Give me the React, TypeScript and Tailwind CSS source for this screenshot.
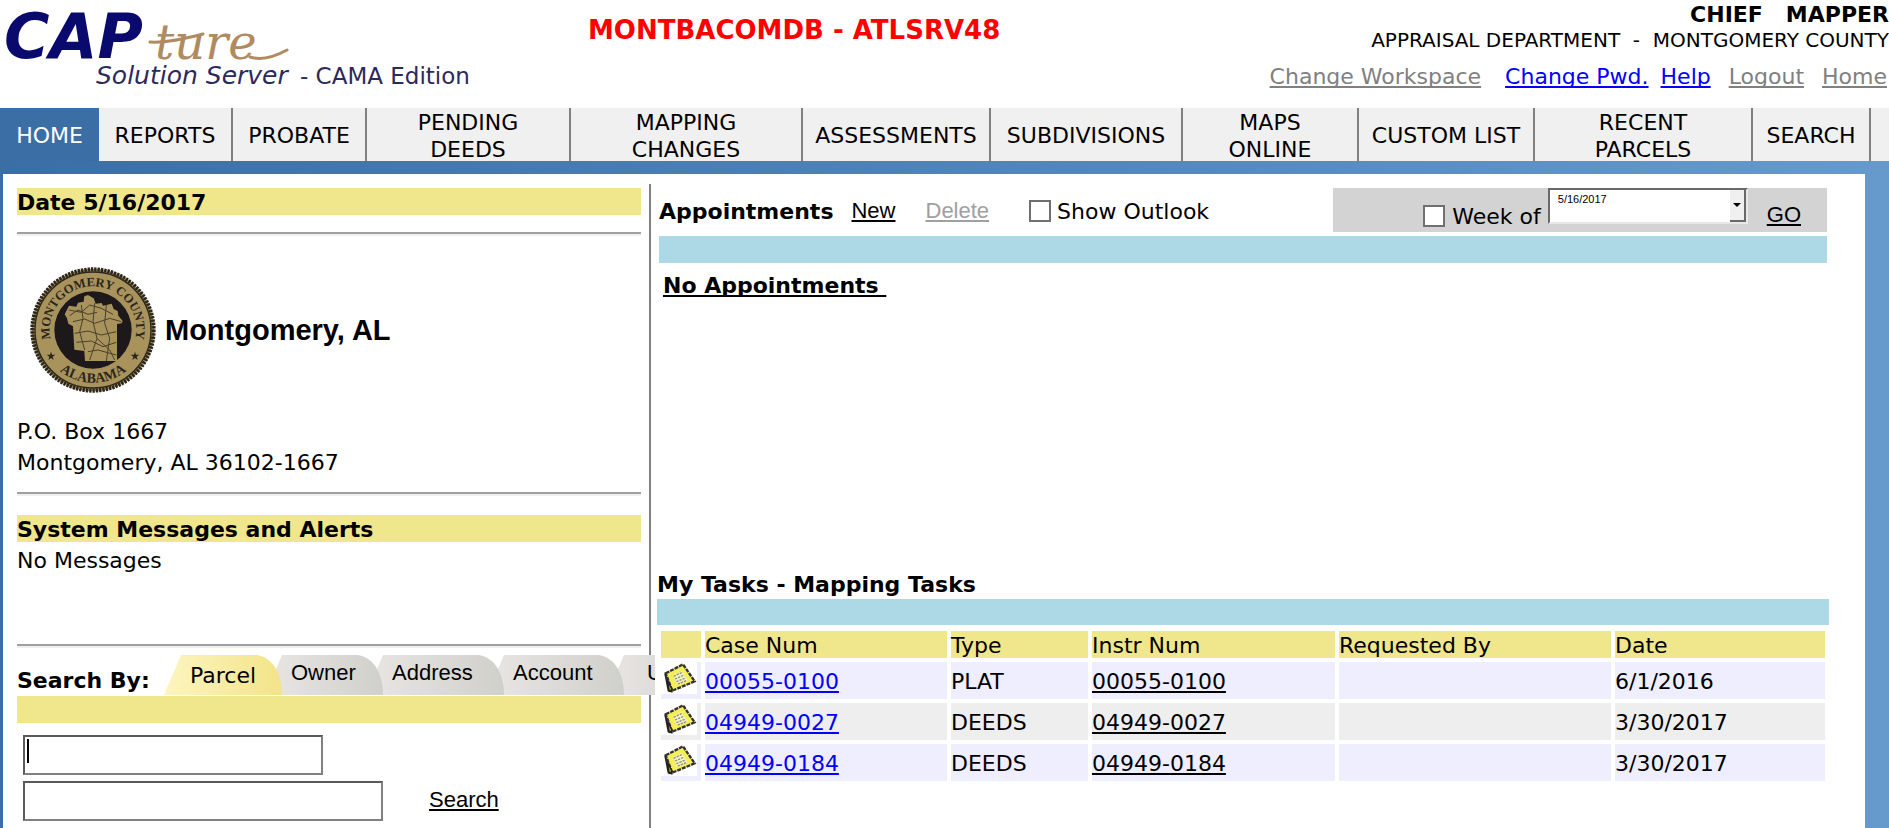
import React from "react";

const sans = "font-['DejaVu_Sans','Verdana',sans-serif]";
const arial = "font-['Liberation_Sans','Arial',sans-serif]";
const underlined =
  "underline decoration-2 underline-offset-2 [text-decoration-skip-ink:none]";

const navItems = [
  "HOME",
  "REPORTS",
  "PROBATE",
  "PENDING\nDEEDS",
  "MAPPING\nCHANGES",
  "ASSESSMENTS",
  "SUBDIVISIONS",
  "MAPS\nONLINE",
  "CUSTOM LIST",
  "RECENT\nPARCELS",
  "SEARCH",
];

const tabs = [
  { label: "Parcel", size: "w-[118px] pl-[26px] z-50", width: 118 },
  { label: "Owner", size: "w-[118px] pl-[26px] z-40 -ml-[17px]", width: 118 },
  { label: "Address", size: "w-[138px] pl-[26px] z-30 -ml-[17px]", width: 138 },
  { label: "Account", size: "w-[137px] pl-[26px] z-20 -ml-[17px]", width: 137 },
  { label: "U", size: "w-[119px] pl-[40px] z-10 -ml-[17px]", width: 119 },
];

const tasks = [
  { num: "00055-0100", type: "PLAT", date: "6/1/2016" },
  { num: "04949-0027", type: "DEEDS", date: "3/30/2017" },
  { num: "04949-0184", type: "DEEDS", date: "3/30/2017" },
];

function Logo() {
  return (
    <svg width="480" height="100" viewBox="0 0 480 100" role="img" aria-label="CAPture Solution Server">
      <text x="4" y="58" fill="#0a0a6e" fontSize="62" fontWeight="bold" fontStyle="italic" fontFamily="'DejaVu Sans', sans-serif">
        CAP
      </text>
      <path d="M150 42 C164 43 184 39 203 34" stroke="#b08a60" strokeWidth="3" fill="none" strokeLinecap="round" />
      <text x="155" y="59" fill="#b08a60" fontSize="48" fontStyle="italic" fontFamily="'DejaVu Serif', serif">
        ture
      </text>
      <path d="M250 57 C262 61 276 56 287 50" stroke="#b08a60" strokeWidth="3" fill="none" strokeLinecap="round" />
      <text x="96" y="84" fill="#2c2a5c" fontSize="25" fontStyle="italic" fontFamily="'DejaVu Sans', sans-serif">
        Solution Server
      </text>
      <text x="300" y="84" fill="#2c2a5c" fontSize="23" fontFamily="'DejaVu Sans', sans-serif">
        - CAMA Edition
      </text>
    </svg>
  );
}

function Seal() {
  return (
    <svg width="128" height="128" viewBox="58 33 384 384" role="img" aria-label="Montgomery County seal">
      <defs>
        <path id="sealTop" d="M128 269 A130 130 0 1 1 372 269" />
        <path id="sealBottom" d="M92 225 A158 158 0 0 0 408 225" />
      </defs>
      <circle cx="250" cy="225" r="184" fill="#a08a58" />
      <circle cx="250" cy="225" r="182" fill="none" stroke="#2b261c" strokeWidth="12" strokeDasharray="7 3" />
      <circle cx="250" cy="225" r="174" fill="#a8935d" stroke="#2b261c" strokeWidth="4" />
      <circle cx="250" cy="225" r="116" fill="#1d191a" />
      <g fill="#2b261c" fontFamily="'Liberation Serif', serif" fontWeight="bold" textAnchor="middle">
        <text fontSize="38">
          <textPath href="#sealTop" startOffset="50%">MONTGOMERY COUNTY</textPath>
        </text>
        <text fontSize="42">
          <textPath href="#sealBottom" startOffset="50%">ALABAMA</textPath>
        </text>
      </g>
      <g fill="#2b261c">
        <path d="M124 290 l3 9 h10 l-8 6 l3 10 l-8 -6 l-8 6 l3 -10 l-8 -6 h10 z" />
        <path d="M376 290 l3 9 h10 l-8 6 l3 10 l-8 -6 l-8 6 l3 -10 l-8 -6 h10 z" />
      </g>
      <path
        d="M165 178 L178 152 L200 155 L205 143 L222 140 L224 124 L235 120 L252 130 L258 146 L276 144 L280 152 L306 146 L312 162 L324 168 L326 182 L339 198 L336 205 L322 207 L322 318 L226 318 L224 288 L194 284 L190 214 L176 206 L172 190 Z"
        fill="#a8935d"
      />
      <path
        d="M178 165 L215 172 L240 150 L275 160 L310 178 M190 200 L225 192 L255 205 L300 190 L335 200 M215 150 L220 190 L210 230 L225 285 M255 145 L250 200 L262 250 L240 315 M290 150 L285 205 L300 250 L290 318 M195 235 L235 228 L275 240 L320 230 M200 262 L245 258 L280 275 L320 262 M235 290 L265 285 L320 300 M262 250 L300 285 L315 315 M180 182 L205 165 L235 178 L262 172"
        fill="none"
        stroke="#4a402c"
        strokeWidth="3"
      />
    </svg>
  );
}

function NoteIcon() {
  return (
    <svg className="block bg-white" width="36" height="32" viewBox="0 0 108 96" aria-hidden="true">
      <path d="M10 36 L20 88 L34 92 L38 78 L20 32 Z" fill="#222" />
      <path d="M14 34 L66 7 L101 58 L34 86 Z" fill="#f3ee5a" stroke="#333" strokeWidth="7" strokeDasharray="12 3" />
      <path d="M20 56 L33 82 L25 88 Z" fill="#d8cf2a" stroke="#222" strokeWidth="4" />
      <path d="M36 40 L62 28 L80 56 L48 68 Z" fill="#f6f4c0" />
      <path d="M38 43 L62 32 M42 51 L68 40 M46 59 L74 48 M50 66 L78 55" stroke="#8d8d86" strokeWidth="4" strokeDasharray="7 3" />
    </svg>
  );
}

function TabShape({ width, active, id }: { width: number; active: boolean; id: string }) {
  return (
    <svg className="absolute inset-0 -z-10" width={width} height="40" aria-hidden="true">
      <defs>
        <linearGradient id={id}>
          <stop offset="0" stopColor={active ? "#fdf5c0" : "#e9e6e3"} />
          <stop offset="1" stopColor={active ? "#f3e388" : "#d0d0cb"} />
        </linearGradient>
      </defs>
      <path d={`M0 40 L17 0 H${width - 25} C${width - 8} 3 ${width} 20 ${width} 40 Z`} fill={`url(#${id})`} />
    </svg>
  );
}

function Rule({ className }: { className: string }) {
  return <hr className={`h-1 border-t-2 border-b-2 border-t-[#a0a0a0] border-b-[#f0f0f0] ${className}`} />;
}

function Header() {
  return (
    <header className="flex h-[108px] items-start">
      <div className="w-[588px] shrink-0">
        <Logo />
      </div>
      <h1 className="pt-[14px] text-[26px] leading-8 font-bold whitespace-nowrap text-[#ff0000]">
        MONTBACOMDB - ATLSRV48
      </h1>
      <div className="ml-auto pt-px text-right whitespace-pre">
        <p className="font-bold">CHIEF   MAPPER</p>
        <p className="text-xl leading-6">APPRAISAL DEPARTMENT  -  MONTGOMERY COUNTY</p>
        <div className="flex justify-end pt-[11px] pr-[2px] text-[#808080]">
          <a href="#workspace" className={underlined}>Change Workspace</a>
          <a href="#password" className={`ml-6 text-[#0000ff] ${underlined}`}>Change Pwd.</a>
          <a href="#help" className={`ml-3 text-[#0000ff] ${underlined}`}>Help</a>
          <a href="#logout" className={`ml-[18px] ${underlined}`}>Logout</a>
          <a href="#home" className={`ml-[18px] ${underlined}`}>Home</a>
        </div>
      </div>
    </header>
  );
}

function Nav() {
  return (
    <nav className="grid h-[53px] grid-cols-[99fr_134fr_134fr_204fr_232fr_188fr_192fr_176fr_176fr_218fr_118fr_18fr] bg-[#f0f0f0]">
      {navItems.map((item, i) => (
        <a
          key={item}
          href="#nav"
          className={`flex h-[53px] items-center justify-center pt-[2px] text-center whitespace-pre ${
            i === 0 ? "bg-[#3a6ea5] text-white" : "border-r-2 border-[#808080]"
          }`}
        >
          {item}
        </a>
      ))}
    </nav>
  );
}

function Sidebar() {
  const bar = "h-[27px] bg-[#f0e68c] leading-[29px] font-bold";
  const field =
    "block h-10 border-2 border-t-[#5a5a5a] border-r-[#808080] border-b-[#808080] border-l-[#5a5a5a] px-1 outline-none";
  return (
    <aside className="w-[646px] shrink-0 pt-[14px] pr-2 pl-[14px]">
      <h2 className={bar}>Date 5/16/2017</h2>
      <Rule className="mt-[17px]" />
      <div className="mt-[30px] ml-3 flex items-center gap-2">
        <Seal />
        <span className={`text-[29px] leading-8 font-bold ${arial}`}>Montgomery, AL</span>
      </div>
      <address className="mt-[22px] leading-[31px] not-italic">
        P.O. Box 1667
        <br />
        Montgomery, AL 36102-1667
      </address>
      <Rule className="mt-[14px]" />
      <h2 className={`mt-[19px] ${bar}`}>System Messages and Alerts</h2>
      <p className="mt-[3px] leading-[31px]">No Messages</p>
      <Rule className="mt-[68px]" />
      <div className="mt-[7px] mb-px flex items-start">
        <span className="mt-3 w-[147px] shrink-0 font-bold">Search By:</span>
        <div className="relative z-10 flex h-10 w-[491px] shrink-0 overflow-hidden bg-white">
          {tabs.map((tab, i) => (
            <button
              key={tab.label}
              type="button"
              className={`relative isolate flex h-10 shrink-0 items-start ${tab.size} ${
                i === 0 ? "pt-[7px]" : `pt-1 ${arial}`
              }`}
            >
              <TabShape width={tab.width} active={i === 0} id={`tab-${i}`} />
              {tab.label}
            </button>
          ))}
        </div>
      </div>
      <div className="h-[27px] bg-[#f0e68c]" />
      <form className="mt-3 ml-[6px] flex flex-col gap-[6px]" onSubmit={(e) => e.preventDefault()}>
        <div className="relative w-[300px]">
          <input type="text" aria-label="Parcel number" className={`w-full ${field}`} />
          <span className="absolute top-1 left-1 h-6 w-[2px] bg-black" />
        </div>
        <div className="flex items-center gap-[46px]">
          <input type="text" aria-label="Parcel suffix" className={`w-[360px] ${field}`} />
          <a href="#search" className={`mb-1 ${arial} ${underlined}`}>Search</a>
        </div>
      </form>
    </aside>
  );
}

function Appointments() {
  const box = "size-[22px] shrink-0 appearance-none border-2 border-[#707070] bg-white checked:bg-[#707070]";
  return (
    <section className="pr-[38px] pl-2">
      <div className="flex h-11 items-center">
        <h2 className="pt-[2px] font-bold">Appointments</h2>
        <a href="#new" className={`ml-[18px] ${arial} ${underlined}`}>New</a>
        <a href="#delete" className={`ml-[30px] text-[#a0a0a0] ${arial} ${underlined}`}>Delete</a>
        <label className="ml-10 flex items-center gap-[6px] pt-[2px]">
          <input type="checkbox" className={box} />
          Show Outlook
        </label>
        <div className="ml-auto flex h-11 w-[494px] items-center justify-end bg-[#d3d3d3] pr-[26px]">
          <label className="mt-3 mr-[7px] flex items-center gap-[7px]">
            <input type="checkbox" className={box} />
            Week of
          </label>
          <div className="relative w-[200px] self-start">
            <select
              aria-label="Week of date"
              className={`block h-9 w-full appearance-none border-2 border-t-[#696969] border-r-[#e8e8e8] border-b-[#e8e8e8] border-l-[#696969] bg-white pb-[14px] pl-2 text-[11px] leading-4 ${arial}`}
            >
              <option>5/16/2017</option>
            </select>
            <span className="pointer-events-none absolute top-[2px] right-[2px] flex h-8 w-4 items-center justify-center border-r-2 border-b-2 border-[#696969] bg-[#f0f0f0]">
              <svg width="8" height="4" viewBox="0 0 8 4" aria-hidden="true">
                <path d="M0 0 H8 L4 4 Z" fill="#000" />
              </svg>
            </span>
          </div>
          <a href="#go" className={`mt-2 ml-[19px] ${arial} ${underlined}`}>GO</a>
        </div>
      </div>
      <div className="mt-1 h-[27px] bg-[#add8e6]" />
      <p className={`mt-[9px] ml-1 w-fit font-bold whitespace-pre ${underlined}`}>No Appointments </p>
    </section>
  );
}

function Tasks() {
  return (
    <section className="mt-[272px] pr-9 pl-[6px]">
      <h2 className="font-bold">My Tasks - Mapping Tasks</h2>
      <div className="mt-px h-[26px] bg-[#add8e6]" />
      <table className="mt-[2px] w-full table-fixed border-separate border-spacing-1 text-left">
        <colgroup>
          <col className="w-10" />
          <col className="w-[242px]" />
          <col className="w-[137px]" />
          <col className="w-[243px]" />
          <col className="w-[272px]" />
          <col className="w-[210px]" />
        </colgroup>
        <thead>
          <tr className="bg-[#f0e68c]">
            {["", "Case Num", "Type", "Instr Num", "Requested By", "Date"].map((h) => (
              <th key={h} className="h-[27px] p-0 pt-[2px] leading-[25px] font-normal">{h}</th>
            ))}
          </tr>
        </thead>
        <tbody>
          {tasks.map((t) => (
            <tr key={t.num} className="bg-[#eeeeff] even:bg-[#eeeeee]">
              <td className="h-[37px] p-0 align-top"><NoteIcon /></td>
              <td className="p-0 pt-[2px]"><a href="#case" className={`text-[#0000ff] ${underlined}`}>{t.num}</a></td>
              <td className="p-0 pt-[2px]">{t.type}</td>
              <td className="p-0 pt-[2px]"><a href="#instrument" className={underlined}>{t.num}</a></td>
              <td className="p-0 pt-[2px]" />
              <td className="p-0 pt-[2px]">{t.date}</td>
            </tr>
          ))}
        </tbody>
      </table>
    </section>
  );
}

export default function App() {
  return (
    <div className={`flex min-h-screen flex-col bg-white text-[22px] leading-[27px] text-black ${sans}`}>
      <Header />
      <Nav />
      <div className="flex flex-1 bg-linear-to-r from-[#3a6ea5] to-[#6699cc] pt-[13px] pr-6 pl-[3px]">
        <div className="flex flex-1 bg-white">
          <Sidebar />
          <main className="mt-[10px] min-w-0 flex-1 border-l-2 border-[#808080] pt-1">
            <Appointments />
            <Tasks />
          </main>
        </div>
      </div>
    </div>
  );
}
